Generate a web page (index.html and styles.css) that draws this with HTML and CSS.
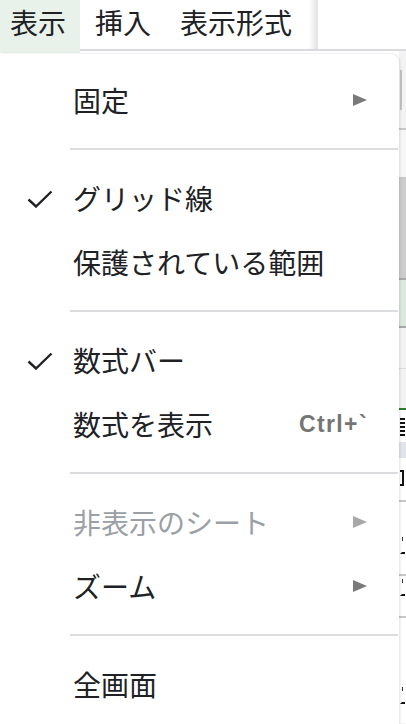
FILE: index.html
```html
<!DOCTYPE html>
<html lang="ja">
<head>
<meta charset="utf-8">
<link rel="stylesheet" href="styles.css">
</head>
<body>
<header class="menubar">
  <nav class="tabs">
    <span class="tab tab-first active">表示</span>
    <span class="tab">挿入</span>
    <span class="tab">表示形式</span>
  </nav>
</header>
<div class="below">
  <div class="menu">
    <div class="section section-first">
      <div class="item"><span class="chk"></span><span class="label">固定</span><span class="arrow"></span></div>
    </div>
    <div class="sep"></div>
    <div class="section">
      <div class="item"><span class="chk"><svg width="26" height="18" viewBox="0 0 26 18"><polyline points="1.5,9.5 9,16.5 24.5,1.5" fill="none" stroke="#202124" stroke-width="2.4"/></svg></span><span class="label">グリッド線</span></div>
      <div class="item"><span class="chk"></span><span class="label">保護されている範囲</span></div>
    </div>
    <div class="sep"></div>
    <div class="section">
      <div class="item"><span class="chk"><svg width="26" height="18" viewBox="0 0 26 18"><polyline points="1.5,9.5 9,16.5 24.5,1.5" fill="none" stroke="#202124" stroke-width="2.4"/></svg></span><span class="label">数式バー</span></div>
      <div class="item"><span class="chk"></span><span class="label">数式を表示</span><span class="shortcut">Ctrl+`</span></div>
    </div>
    <div class="sep"></div>
    <div class="section">
      <div class="item disabled"><span class="chk"></span><span class="label">非表示のシート</span><span class="arrow"></span></div>
      <div class="item"><span class="chk"></span><span class="label">ズーム</span><span class="arrow"></span></div>
    </div>
    <div class="sep"></div>
    <div class="section">
      <div class="item"><span class="chk"></span><span class="label">全画面</span></div>
    </div>
  </div>
  <div class="strip">
    <div class="s s1"><span class="thumb"></span></div>
    <div class="s line"></div>
    <div class="s s2"></div>
    <div class="s line"></div>
    <div class="s s3"></div>
    <div class="s line dark"></div>
    <div class="s s4"></div>
    <div class="s line dark"></div>
    <div class="s s5"></div>
    <div class="s line thin"></div>
    <div class="s s6"></div>
    <div class="s gline"></div>
    <div class="s s7 cell"><span class="frag frag-block"></span></div>
    <div class="s s8"></div>
    <div class="s s9 cell"><span class="frag frag-ko"></span></div>
    <div class="s line"></div>
    <div class="s s10 cell"><span class="frag frag-mu mu-a"></span></div>
    <div class="s line"></div>
    <div class="s s11 cell"><span class="frag frag-mu mu-b"></span></div>
    <div class="s line"></div>
    <div class="s s12 cell"><span class="frag frag-mu mu-c"></span></div>
  </div>
</div>
</body>
</html>
```

FILE: styles.css
```css
* { box-sizing: border-box; }
html, body { margin: 0; padding: 0; }
body {
  width: 406px;
  height: 724px;
  overflow: hidden;
  background: #ffffff;
  font-family: "Noto Sans CJK JP", "Noto Sans", sans-serif;
  color: #202124;
}

.menubar {
  height: 51px;
  border-bottom: 2px solid #d9d9de;
  display: flex;
}
.tabs {
  position: relative;
  width: 318px;
  height: 49px;
  display: flex;
  align-items: flex-start;
  background: linear-gradient(to right, #ffffff 0, #ffffff 309px, #e4e4e4 317px);
  border-right: 1px solid #e6e6e6;
}
.tab {
  font-size: 28px;
  line-height: 44px;
  height: 49px;
  padding: 0 14px 0 15px;
  white-space: nowrap;
}
.tab-first { padding-left: 10px; padding-right: 14px; }
.tab.active {
  background: #e8f1ea;
  height: 53px;
  position: relative;
  z-index: 1;
}

.below {
  display: flex;
  height: 673px;
}
.menu {
  width: 399px;
  margin-top: 3px;
  background: #ffffff;
  border-top-right-radius: 9px;
  box-shadow: 1px 0 3px rgba(0,0,0,0.12);
  position: relative;
  z-index: 2;
}
.section { padding: 16px 0; }
.section-first { padding-top: 14px; }
.sep {
  height: 2px;
  margin-left: 70px;
  margin-right: 1px;
  background: #dadce0;
}
.item {
  height: 64px;
  display: flex;
  align-items: center;
  padding-right: 32px;
}
.chk {
  width: 73px;
  flex: none;
  padding-left: 27px;
  display: flex;
  align-items: center;
  padding-top: 1px;
}
.label {
  flex: 1;
  font-size: 28px;
  line-height: 40px;
  white-space: nowrap;
}
.disabled .label { color: #9aa0a6; }
.arrow {
  width: 0;
  height: 0;
  border-left: 14px solid #7a7a7a;
  border-top: 6.5px solid transparent;
  border-bottom: 6.5px solid transparent;
}
.disabled .arrow { border-left-color: #a8a8a8; }
.shortcut {
  font-family: "Liberation Sans", Arial, sans-serif;
  font-weight: 700;
  font-size: 23px;
  color: #757575;
  letter-spacing: 1.4px;
  margin-right: -1px;
}

.strip {
  width: 7px;
  flex: none;
  display: flex;
  flex-direction: column;
  background: #f3f3f3;
  overflow: hidden;
}
.s { flex: none; position: relative; }
.s1 { height: 77px; }
.thumb {
  position: absolute;
  left: 1px;
  top: 19px;
  width: 2px;
  height: 40px;
  background: #c4c4c4;
}
.line { height: 2px; background: #c8c8c8; }
.line.dark { background: #a9a9a9; }
.line.thin { height: 1px; background: #dcdcdc; }
.gline { height: 2px; background: #2e7d32; }
.s2 { height: 47px; background: #f7f7f7; }
.s3 { height: 99px; background: #cdcdcd; }
.s4 { height: 46px; background: #dbe8dd; }
.s5 { height: 40px; }
.s6 { height: 39px; }
.cell { background: #ffffff; overflow: hidden; }
.s7 { height: 32px; }
.s8 { height: 16px; background: #e2e4ec; }
.s9 { height: 42px; }
.s10 { height: 72px; }
.s11 { height: 40px; }
.s12 { height: 105px; }

.frag { position: absolute; left: 1px; }
.frag-block {
  top: 8px;
  width: 5px;
  height: 20px;
  background: repeating-linear-gradient(to bottom, #111 0, #111 2px, #fff 2px, #fff 4px);
}
.frag-ko {
  top: 12px;
  width: 4px;
  height: 16px;
  border: 2px solid #111;
  border-left: none;
}
.frag-mu {
  width: 5px;
  height: 12px;
  border-bottom: 2px solid #111;
  border-left: 2px solid transparent;
}
.frag-mu::before {
  content: "";
  position: absolute;
  left: 0;
  top: -5px;
  width: 1px;
  height: 4px;
  background: #333;
}
.mu-a { top: 40px; }
.mu-b { top: 8px; }
.mu-c { top: 74px; }
```
